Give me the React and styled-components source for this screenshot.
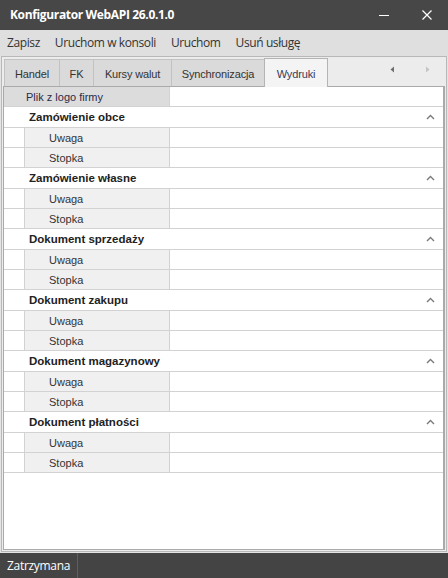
import React from "react";
import styled, { createGlobalStyle } from "styled-components";

const Global = createGlobalStyle`
  html, body { margin: 0; padding: 0; }
  body { width: 448px; height: 578px; overflow: hidden; background: #e6e6e6; }
  * { box-sizing: border-box; }
`;

const Window = styled.div`
  width: 448px;
  height: 578px;
  display: flex;
  flex-direction: column;
  background: #e4e4e4;
  font-family: "Liberation Sans", Arial, sans-serif;
`;

const TitleBar = styled.div`
  height: 30px;
  flex: none;
  background: #474747;
  display: flex;
  align-items: center;
  padding-left: 10px;
  color: #fff;
`;

const Title = styled.div`
  flex: 1;
  font-family: "Open Sans", "Noto Sans", sans-serif;
  font-weight: 700;
  font-size: 12px;
  letter-spacing: -0.35px;
  padding-bottom: 1px;
`;

const WinButton = styled.div`
  width: 43px;
  height: 30px;
  display: flex;
  align-items: center;
  justify-content: center;
`;

const MenuBar = styled.div`
  height: 26px;
  flex: none;
  display: flex;
  align-items: center;
  gap: 15px;
  padding-left: 7px;
  background: #dfdfdf;
  font-family: "Open Sans", "Noto Sans", sans-serif;
  font-size: 12px;
  color: #333;
  letter-spacing: -0.4px;
`;

const MenuItem = styled.span`
  padding-bottom: 2px;
`;

const Frame = styled.div`
  flex: 1;
  margin: 0 1px 1px 1px;
  border: 1px solid #b8b8b8;
  background: #ececec;
  display: flex;
  flex-direction: column;
  padding: 0 1px 1px 1px;
  min-height: 0;
`;

const TabStrip = styled.div`
  height: 29px;
  flex: none;
  display: flex;
  align-items: flex-end;
  padding-left: 1px;
`;

const Tab = styled.div`
  width: ${(p) => p.$w}px;
  height: ${(p) => (p.$active ? 29 : 27)}px;
  flex: none;
  display: flex;
  align-items: center;
  justify-content: center;
  font-size: 11px;
  letter-spacing: -0.15px;
  color: ${(p) => (p.$active ? "#3a3a55" : "#333")};
  background: ${(p) => (p.$active ? "#f4f4f4" : "#dadada")};
  border: 1px solid ${(p) => (p.$active ? "#b4b4b4" : "#c2c2c2")};
  border-bottom: none;
  margin-right: -1px;
  margin-bottom: ${(p) => (p.$active ? -1 : 0)}px;
  padding-top: 1px;
  position: relative;
  z-index: ${(p) => (p.$active ? 2 : 1)};
`;

const Arrows = styled.div`
  margin-left: auto;
  height: 100%;
  display: flex;
  align-items: center;
  gap: 30px;
  padding-right: 15px;
  padding-bottom: 4px;
`;

const Panel = styled.div`
  flex: 1;
  background: #fff;
  border: 1px solid #aaaaaa;
  border-right-width: 2px;
  display: flex;
  flex-direction: column;
  min-height: 0;
  font-size: 11px;
  color: #333;
`;

const Row = styled.div`
  display: flex;
  height: 20px;
  border-bottom: 1px solid #d2d2d2;
  flex: none;
`;

const Indent = styled.div`
  width: ${(p) => p.$w}px;
  flex: none;
  border-right: 1px solid #d2d2d2;
`;

const Label = styled.div`
  width: ${(p) => p.$w}px;
  flex: none;
  background: ${(p) => p.$bg};
  color: ${(p) => p.$color || "#333"};
  display: flex;
  align-items: center;
  padding-left: ${(p) => p.$pl}px;
  border-right: 1px solid #d2d2d2;
`;

const Value = styled.div`
  flex: 1;
`;

const GroupHeader = styled.div`
  display: flex;
  align-items: center;
  height: 21px;
  flex: none;
  border-bottom: 1px solid #d2d2d2;
  padding-left: 25px;
  padding-right: 8px;
  font-weight: 700;
  font-size: 11.5px;
  color: #222;
`;

const GroupTitle = styled.span`
  flex: 1;
`;

const StatusBar = styled.div`
  height: 25px;
  flex: none;
  background: #444444;
  display: flex;
  align-items: stretch;
  color: #fff;
  font-family: "Open Sans", "Noto Sans", sans-serif;
  font-size: 12px;
`;

const StatusCell = styled.div`
  width: 78px;
  display: flex;
  align-items: center;
  padding-left: 7px;
  border-right: 1px solid #5e5e5e;
  letter-spacing: -0.3px;
`;

const Chevron = () => (
  <svg width="9" height="6" viewBox="0 0 9 6">
    <path d="M1 5 L4.5 1.5 L8 5" fill="none" stroke="#7a7a7a" strokeWidth="1.4" />
  </svg>
);

const tabs = [
  ["Handel", 56],
  ["FK", 35],
  ["Kursy walut", 79],
  ["Synchronizacja", 94],
  ["Wydruki", 64, true],
];

const groups = [
  "Zamówienie obce",
  "Zamówienie własne",
  "Dokument sprzedaży",
  "Dokument zakupu",
  "Dokument magazynowy",
  "Dokument płatności",
];

export default function App() {
  return (
    <>
      <Global />
      <Window>
        <TitleBar>
          <Title>Konfigurator WebAPI 26.0.1.0</Title>
          <WinButton>
            <svg width="12" height="12" viewBox="0 0 12 12">
              <path d="M1 6.5 H11" stroke="#fff" strokeWidth="1" />
            </svg>
          </WinButton>
          <WinButton>
            <svg width="12" height="12" viewBox="0 0 12 12">
              <path d="M1.5 1.5 L10.5 10.5 M10.5 1.5 L1.5 10.5" stroke="#fff" strokeWidth="1.2" />
            </svg>
          </WinButton>
        </TitleBar>
        <MenuBar>
          <MenuItem>Zapisz</MenuItem>
          <MenuItem>Uruchom w konsoli</MenuItem>
          <MenuItem>Uruchom</MenuItem>
          <MenuItem>Usuń usługę</MenuItem>
        </MenuBar>
        <Frame>
          <TabStrip>
            {tabs.map(([t, w, a]) => (
              <Tab key={t} $w={w} $active={a}>
                {t}
              </Tab>
            ))}
            <Arrows>
              <svg width="5" height="7" viewBox="0 0 5 7">
                <path d="M4 0.5 L0.5 3.5 L4 6.5 Z" fill="#6e6e6e" />
              </svg>
              <svg width="5" height="7" viewBox="0 0 5 7">
                <path d="M1 0.5 L4.5 3.5 L1 6.5 Z" fill="#c4c4c4" />
              </svg>
            </Arrows>
          </TabStrip>
          <Panel>
            <Row>
              <Label $w={166} $bg="#dcdcdc" $pl={22} $color="#2b2b4a">
                Plik z logo firmy
              </Label>
              <Value />
            </Row>
            {groups.map((g) => (
              <React.Fragment key={g}>
                <GroupHeader>
                  <GroupTitle>{g}</GroupTitle>
                  <Chevron />
                </GroupHeader>
                {["Uwaga", "Stopka"].map((l) => (
                  <Row key={l}>
                    <Indent $w={21} />
                    <Label $w={145} $bg="#f0f0f0" $pl={24}>
                      {l}
                    </Label>
                    <Value />
                  </Row>
                ))}
              </React.Fragment>
            ))}
          </Panel>
        </Frame>
        <StatusBar>
          <StatusCell>Zatrzymana</StatusCell>
        </StatusBar>
      </Window>
    </>
  );
}
